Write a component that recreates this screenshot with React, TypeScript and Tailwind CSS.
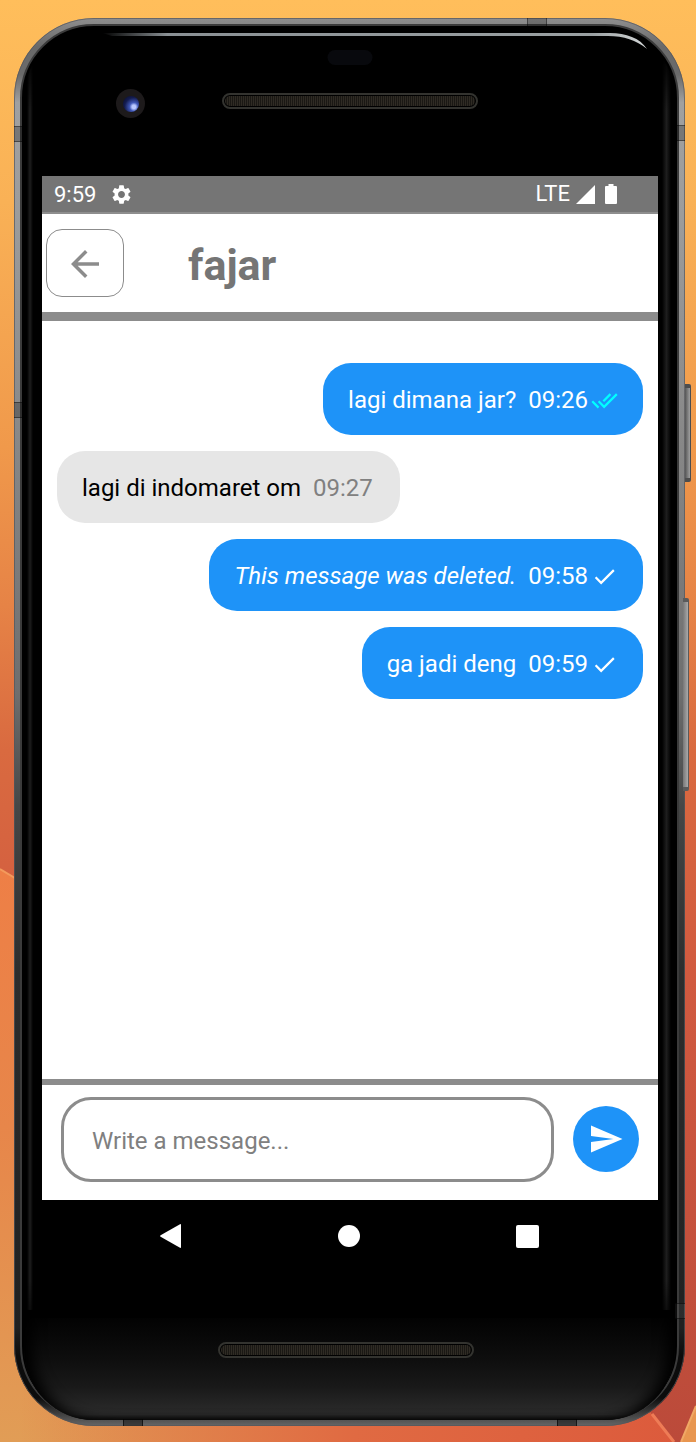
import React from "react";
import { MdArrowBack, MdDone, MdDoneAll, MdSend, MdSettings } from "react-icons/md";

type Status = "read" | "sent";

interface Message {
  id: number;
  text: string;
  time: string;
  mine: boolean;
  deleted?: boolean;
  status?: Status;
}

const messages: Message[] = [
  { id: 1, text: "lagi dimana jar?", time: "09:26", mine: true, status: "read" },
  { id: 2, text: "lagi di indomaret om", time: "09:27", mine: false },
  { id: 3, text: "This message was deleted.", time: "09:58", mine: true, deleted: true, status: "sent" },
  { id: 4, text: "ga jadi deng", time: "09:59", mine: true, status: "sent" },
];

function Wallpaper() {
  return (
    <svg
      className="absolute inset-0 h-full w-full"
      viewBox="0 0 696 1442"
      preserveAspectRatio="none"
      aria-hidden="true"
    >
      <defs>
        <linearGradient id="sky" gradientUnits="userSpaceOnUse" x1="0" y1="0" x2="0" y2="1442">
          <stop offset="0" stopColor="#ffbe5b" />
          <stop offset="0.14" stopColor="#f9b156" />
          <stop offset="0.31" stopColor="#f0994b" />
          <stop offset="0.42" stopColor="#e68346" />
          <stop offset="0.52" stopColor="#d96a40" />
          <stop offset="0.68" stopColor="#d15a40" />
          <stop offset="1" stopColor="#bb4a3a" />
        </linearGradient>
        <linearGradient id="dune" gradientUnits="userSpaceOnUse" x1="0" y1="870" x2="0" y2="1442">
          <stop offset="0" stopColor="#ee7f46" />
          <stop offset="0.45" stopColor="#e7864a" />
          <stop offset="1" stopColor="#e19d56" />
        </linearGradient>
        <linearGradient id="duneFade" gradientUnits="userSpaceOnUse" x1="20" y1="0" x2="690" y2="0">
          <stop offset="0" stopColor="#df6440" stopOpacity="0" />
          <stop offset="0.5" stopColor="#e06a42" />
          <stop offset="1" stopColor="#dc5a3c" />
        </linearGradient>
      </defs>
      <rect width="696" height="1442" fill="url(#sky)" />
      <path d="M0 869 L40 893 L640 1400 L674 1442 H0 Z" fill="url(#dune)" />
      <path d="M0 869 L40 893 L640 1400 L674 1442 H0 Z" fill="url(#duneFade)" />
      <path d="M0 869 L40 893" stroke="#f39a5c" strokeWidth="2" />
      <path d="M652 1414 L674 1442" stroke="#ee7c56" strokeWidth="3" />
      <path d="M696 1406 L681 1442 H696 Z" fill="#e89650" />
      <path d="M696 1406 L681 1442" stroke="#f0a865" strokeWidth="2" />
    </svg>
  );
}

function SpeakerGrille() {
  return (
    <div className="h-4 w-64 rounded-full border-2 border-[#33332f] bg-black p-px">
      <div className="h-full rounded-full bg-[repeating-linear-gradient(90deg,#2f2b24_0_1px,#1a1814_1px_2px)]" />
    </div>
  );
}

function Bezel() {
  return (
    <div className="pointer-events-none absolute inset-0" aria-hidden="true">
      <div className="absolute inset-0 rounded-[80px] bg-[linear-gradient(180deg,#8f8f8f_0%,#6a6a6a_2%,#6a6a6a_4%,#a0a0a0_6%,#9c9c9c_14%,#858585_32%,#6e6e6e_48%,#454747_56%,#2c2d2d_68%,#202121_93%,#0c0c0c_95%,#0c0c0c_98%,#666_100%)]" />
      <div className="absolute inset-0 rounded-[80px] border border-[#55565a]/70" />
      <div className="absolute top-[6px] right-[6px] bottom-[6px] left-[6px] rounded-[74px] border-2 border-[#3b3b3b] bg-black" />
      <div className="absolute top-[10px] right-[10px] bottom-[6px] left-[10px] overflow-hidden rounded-[70px] bg-black">
        <div className="absolute inset-y-0 left-[3px] w-[6px] bg-[linear-gradient(90deg,#000,#1e1e1e,#000)] [mask-image:linear-gradient(180deg,transparent_2%,#000_6%,#000_90%,transparent_94%)]" />
        <div className="absolute inset-y-0 right-[4px] w-[9px] bg-[linear-gradient(90deg,#000,#1e1e1e,#000)] [mask-image:linear-gradient(180deg,transparent_2%,#000_6%,#000_90%,transparent_94%)]" />
        <div className="absolute inset-x-0 bottom-0 h-[110px] rounded-b-[70px] bg-[linear-gradient(180deg,#000,#0e0e0e_45%,#191919_70%,#2c2c2c_95%,#111)] shadow-[inset_14px_-2px_14px_-6px_#000,inset_-14px_-2px_14px_-6px_#000]" />
      </div>
      <svg className="absolute top-[12px] right-[37px] h-[22px] w-[546px]" viewBox="0 0 546 22" fill="none">
        <defs>
          <linearGradient id="shine" x1="0" y1="0" x2="1" y2="0">
            <stop offset="0" stopColor="#8a9094" stopOpacity="0" />
            <stop offset="0.12" stopColor="#8a9094" />
            <stop offset="0.9" stopColor="#9aa0a2" />
            <stop offset="1" stopColor="#d5d8d8" />
          </linearGradient>
        </defs>
        <path d="M0 3 H508 C524 3 538 8 545 19 C534 10 522 6 506 6 H10 Z" fill="url(#shine)" />
      </svg>
      <div className="absolute top-0 right-[138px] h-[8px] w-5 border-x border-black/40 bg-black/20" />
      <div className="absolute top-[108px] left-0 h-4 w-[10px] border-y border-black/40 bg-black/25" />
      <div className="absolute top-[107px] right-0 h-4 w-[10px] border-y border-black/40 bg-black/25" />
      <div className="absolute top-[384px] left-0 h-4 w-[10px] border-y border-black/40 bg-black/25" />
      <div className="absolute right-0 bottom-[107px] h-4 w-[10px] border-y border-black/50 bg-white/5" />
      <div className="absolute bottom-0 left-[109px] h-[7px] w-5 border-x border-black/60 bg-black/40" />
      <div className="absolute right-[108px] bottom-0 h-[7px] w-5 border-x border-black/60 bg-black/40" />
      <div className="absolute top-[366px] -right-[6px] h-[98px] w-[6px] rounded-r-xs border-y-4 border-r border-[#4d4d4d] bg-[linear-gradient(90deg,#555,#a0a0a0)]" />
      <div className="absolute top-[580px] -right-[4px] h-[193px] w-[6px] rounded-r-xs border-y-4 border-r border-[#5a5a5a] bg-[linear-gradient(90deg,#777,#aaa)]" />
    </div>
  );
}

function StatusBar() {
  return (
    <div className="flex h-[38px] items-center justify-between border-b-2 border-[#8e8e8e] bg-[#757575] pr-[41px] pl-3 text-[22px] leading-none text-white">
      <div className="flex items-center gap-[14px]">
        <span className="pt-[2px]">9:59</span>
        <MdSettings className="size-[23px]" aria-hidden="true" />
      </div>
      <div className="flex items-center">
        <span className="mr-[6px]">LTE</span>
        <svg className="mr-[10px] size-[19px] fill-white" viewBox="0 0 19 19" aria-hidden="true">
          <path d="M19 0 V19 H0 Z" />
        </svg>
        <svg className="h-5 w-3 fill-white" viewBox="0 0 12 20" aria-hidden="true">
          <path d="M3.5 0 H8.5 V2 H11 Q12 2 12 3 V19 Q12 20 11 20 H1 Q0 20 0 19 V3 Q0 2 1 2 H3.5 Z" />
        </svg>
      </div>
    </div>
  );
}

function Bubble({ message }: { message: Message }) {
  const { text, time, mine, deleted, status } = message;
  return (
    <li
      className={
        mine
          ? "flex h-[72px] items-center self-end rounded-[28px] bg-[#1e93f8] px-[25px] pt-[2px] text-white"
          : "flex h-[72px] items-center self-start rounded-[28px] bg-[#e6e6e6] px-[25px] pt-[2px] text-black"
      }
    >
      <span className={deleted ? "mr-3 italic" : "mr-3"}>{text}</span>
      <time className={mine ? "" : "mr-[2px] text-[#808080]"}>{time}</time>
      {status === "read" && <MdDoneAll className="ml-[3px] size-[27px] text-[#00ffff]" aria-label="Read" />}
      {status === "sent" && <MdDone className="ml-[3px] size-[27px]" aria-label="Sent" />}
    </li>
  );
}

export default function App() {
  return (
    <div className="relative flex min-h-screen overflow-hidden pt-[18px] pr-[11px] pb-4 pl-[14px] font-['Roboto',sans-serif]">
      <Wallpaper />
      <div className="relative flex min-w-0 flex-1 flex-col pr-[27px] pl-7">
        <Bezel />

        <div className="relative h-[158px] shrink-0" aria-hidden="true">
          <div className="absolute top-[32px] left-1/2 h-[15px] w-[45px] -translate-x-1/2 rounded-full bg-[#08090d]" />
          <div className="absolute top-[71px] left-[74px] flex size-[29px] items-center justify-center rounded-full bg-[#1d1a1b]">
            <div className="size-4 rounded-full bg-[radial-gradient(circle_at_68%_68%,#b9c8ff_0_12%,#4058b8_28%,#141c50_60%,#070a20)]" />
          </div>
          <div className="absolute top-[75px] left-1/2 -translate-x-1/2">
            <SpeakerGrille />
          </div>
        </div>

        <main className="relative flex flex-1 flex-col bg-white">
          <StatusBar />
          <header className="flex h-[107px] items-center gap-16 border-b-[9px] border-[#8c8c8c] pl-1">
            <button
              type="button"
              aria-label="Back"
              className="flex h-[68px] w-[78px] items-center justify-center rounded-2xl border border-[#8c8c8c] pt-px text-[#8c8c8c]"
            >
              <MdArrowBack className="size-[42px]" />
            </button>
            <h1 className="pt-1 text-[43px] leading-none font-bold text-[#757575]">fajar</h1>
          </header>

          <ul className="flex flex-1 flex-col gap-4 px-[15px] pt-[42px] pb-4 text-2xl whitespace-nowrap">
            {messages.map((m) => (
              <Bubble key={m.id} message={m} />
            ))}
          </ul>

          <form
            className="flex items-start gap-[19px] border-t-[6px] border-[#8c8c8c] pt-3 pr-[19px] pb-[18px] pl-[19px]"
            onSubmit={(e) => e.preventDefault()}
          >
            <input
              type="text"
              aria-label="Write a message"
              placeholder="Write a message..."
              className="h-[85px] min-w-0 flex-1 rounded-[30px] border-3 border-[#8c8c8c] bg-white px-7 pt-[2px] text-2xl text-black outline-none placeholder:text-[#808080]"
            />
            <button
              type="submit"
              aria-label="Send"
              className="mt-[9px] flex size-[66px] shrink-0 items-center justify-center rounded-full bg-[#1e93f8] text-white"
            >
              <MdSend className="size-9" />
            </button>
          </form>
        </main>

        <div className="relative flex h-[226px] shrink-0 flex-col justify-between pt-[23px] pb-[68px]">
          <nav className="flex items-center justify-between pr-[119px] pl-[117px]" aria-label="System navigation">
            <button type="button" aria-label="Back">
              <svg className="h-[26px] w-[23px] fill-white" viewBox="0 0 23 26">
                <path d="M21 1.2 Q22 .7 22 2 V24 Q22 25.3 21 24.8 L1.6 13.8 Q.4 13 1.6 12.2 Z" />
              </svg>
            </button>
            <button type="button" aria-label="Home" className="size-[22px] rounded-full bg-white" />
            <button type="button" aria-label="Recent apps" className="size-[23px] rounded-xs bg-white" />
          </nav>
          <div className="flex justify-center pr-2" aria-hidden="true">
            <SpeakerGrille />
          </div>
        </div>
      </div>
    </div>
  );
}
